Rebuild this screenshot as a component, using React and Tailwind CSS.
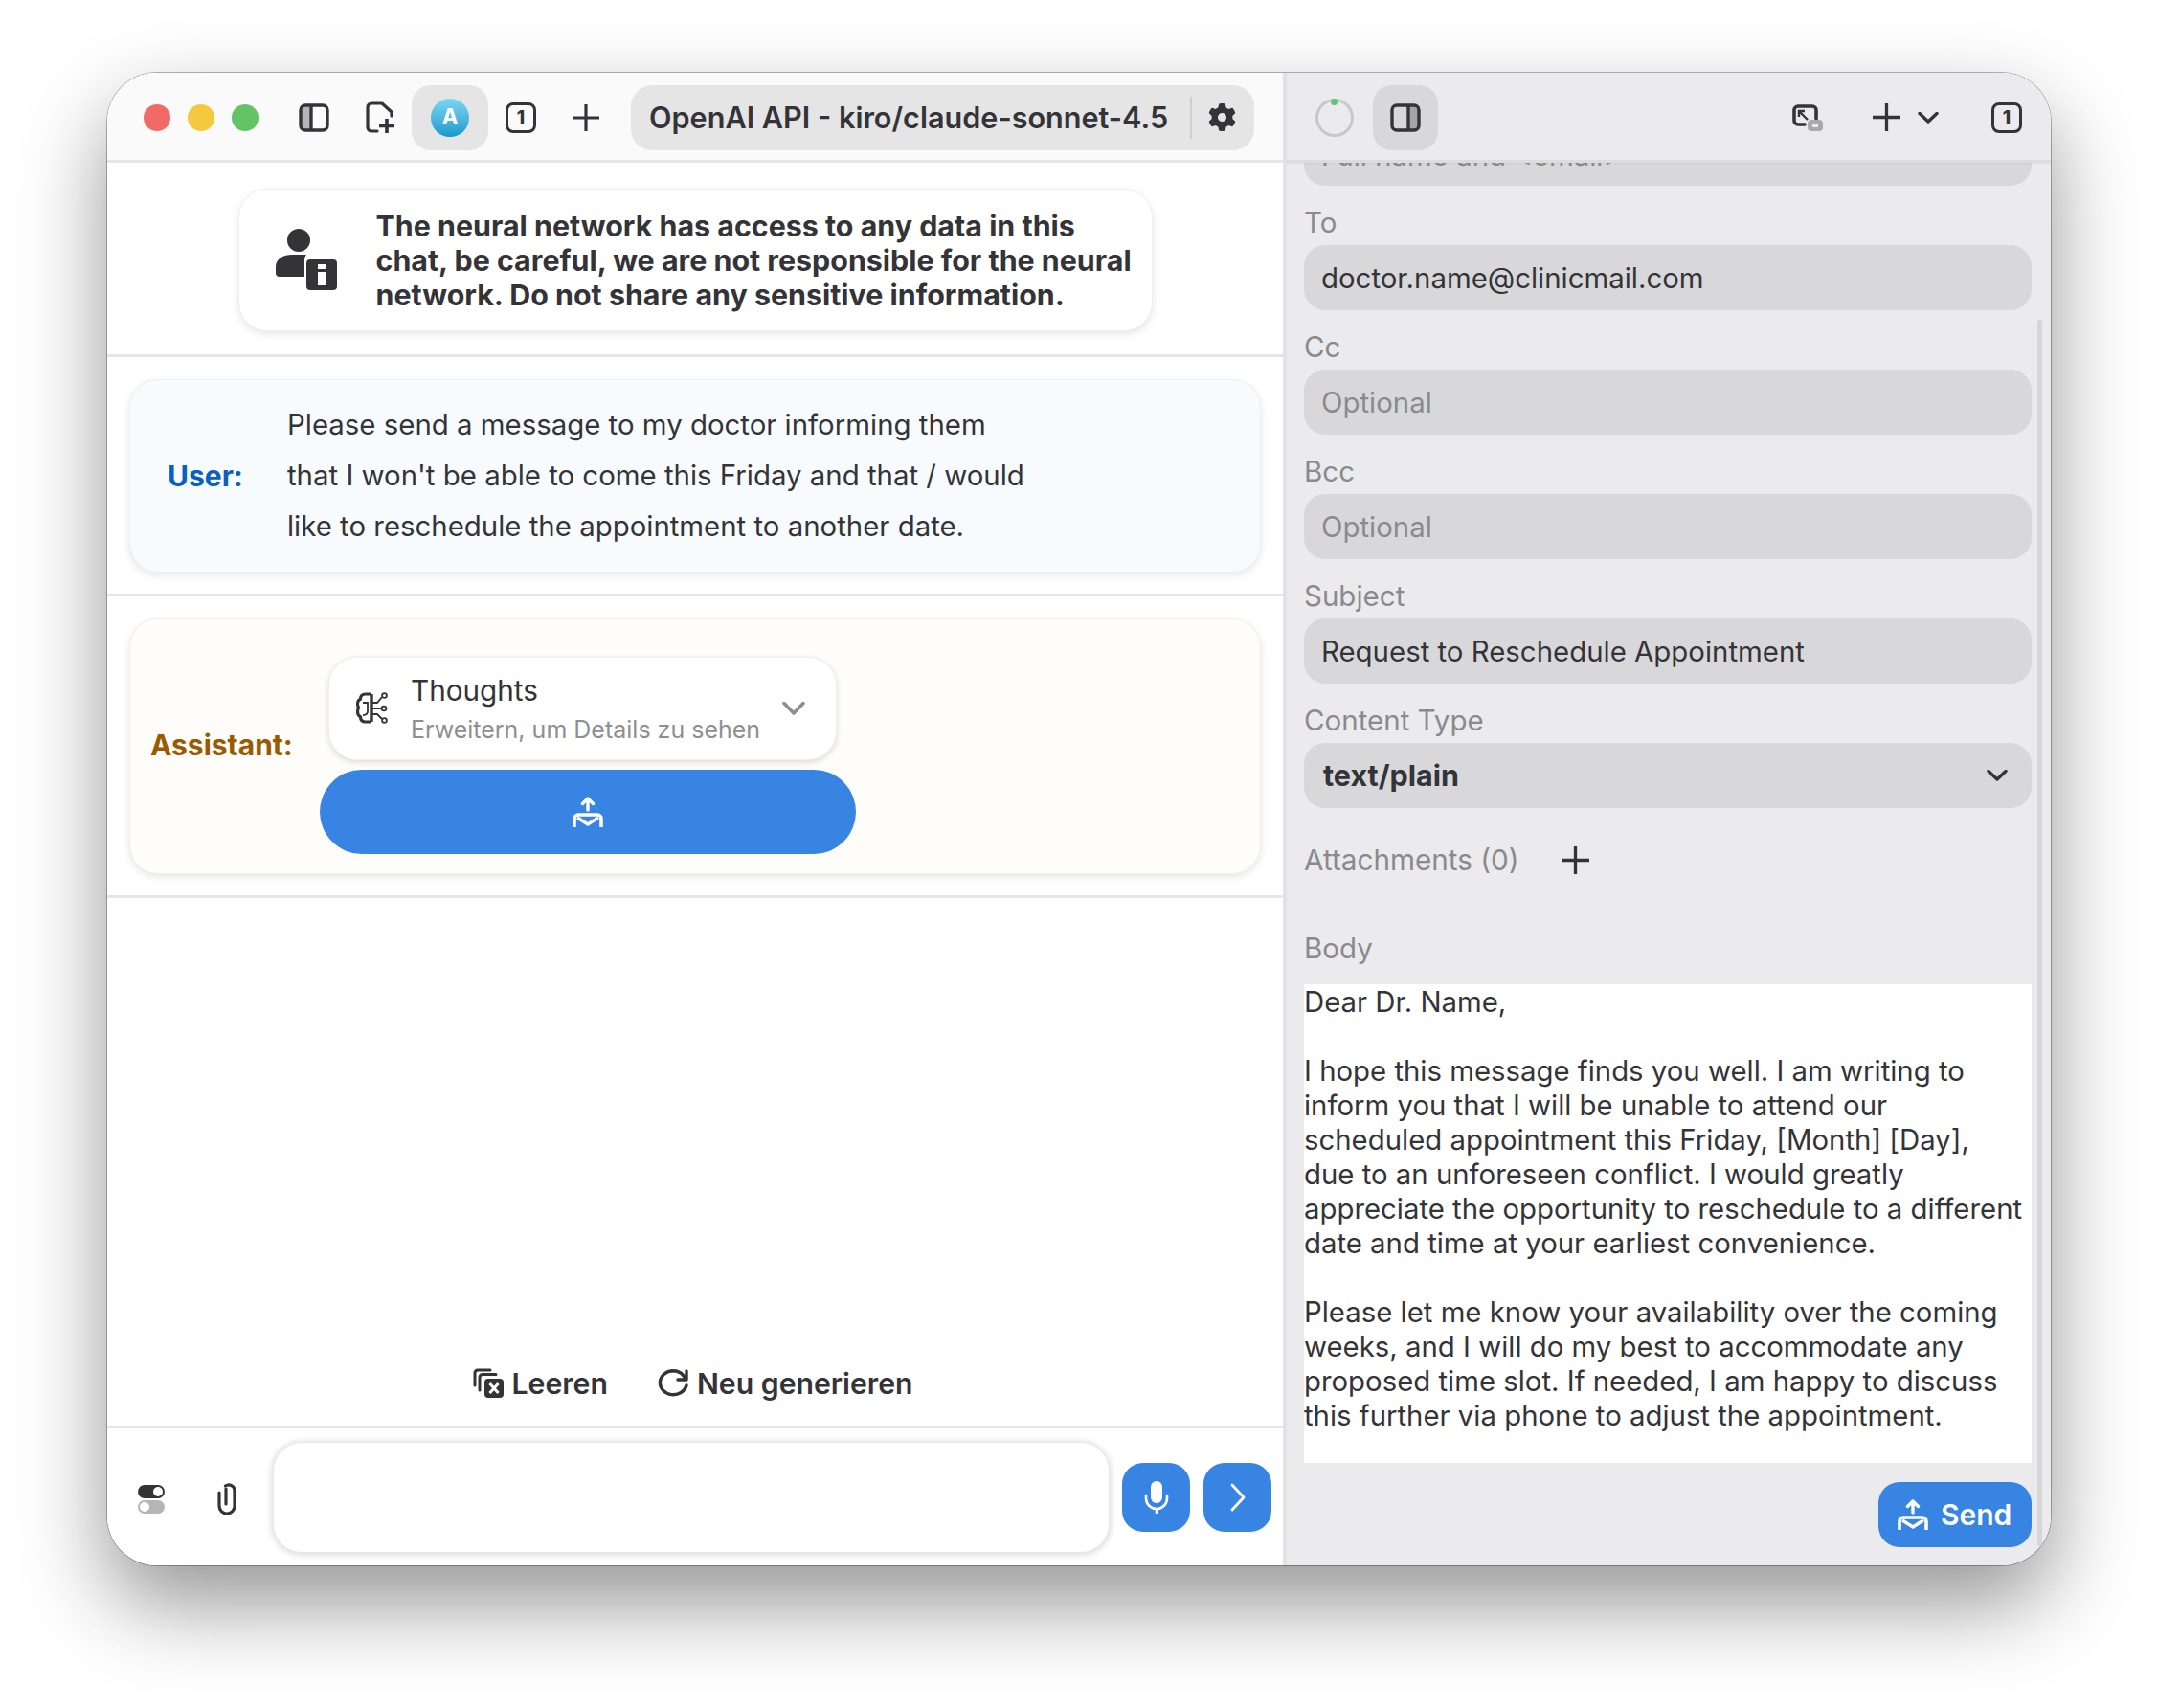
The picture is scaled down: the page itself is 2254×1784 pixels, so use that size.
import React from "react";
import { FaGear } from "react-icons/fa6";

const ink = "#333338";

function PlusIcon({ size = 28 }) {
  return (
    <svg width={size} height={size} viewBox="0 0 28 28" fill="none" stroke={ink} strokeWidth="3.2" className="shrink-0">
      <path d="M14 0v28M0 14h28" />
    </svg>
  );
}

function Chevron({ w = 22, h = 12, color = ink, sw = 3.4 }) {
  return (
    <svg width={w} height={h} viewBox={`0 0 ${w} ${h}`} fill="none" stroke={color} strokeWidth={sw} className="shrink-0">
      <path d={`M2 1.5L${w / 2} ${h - 2}L${w - 2} 1.5`} strokeLinecap="round" strokeLinejoin="round" />
    </svg>
  );
}

function SidebarIcon({ side = "left" }) {
  return (
    <svg width="32" height="30" viewBox="0 0 32 30" fill="none" className="shrink-0">
      {side === "left" ? <path d="M5 3h7v24H5a3 3 0 0 1-3-3V6a3 3 0 0 1 3-3z" fill="#b5b5b8" /> : <path d="M20 3h7a3 3 0 0 1 3 3v18a3 3 0 0 1-3 3h-7z" fill="#a5a5a9" />}
      <rect x="2" y="2" width="28" height="26" rx="5" stroke={ink} strokeWidth="3.4" />
      <path d={side === "left" ? "M13 3v24" : "M19 3v24"} stroke={ink} strokeWidth="3.4" />
    </svg>
  );
}

function FilePlusIcon() {
  return (
    <svg width="32" height="34" viewBox="0 0 32 34" fill="none" className="shrink-0">
      <path d="M12 31H6a4 4 0 0 1-4-4V6a4 4 0 0 1 4-4h11l10 9v4" stroke={ink} strokeWidth="3.2" strokeLinecap="round" strokeLinejoin="round" />
      <path d="M22 18v15M14 25.5h16" stroke={ink} strokeWidth="3.6" />
    </svg>
  );
}

function NumberBox() {
  return (
    <div className="w-8 h-8 shrink-0 rounded-lg border-[3.5px] border-[#333338] flex items-center justify-center text-[19px] leading-none font-extrabold text-[#333338]">1</div>
  );
}

function PersonInfoIcon() {
  return (
    <svg width="64" height="64" viewBox="0 0 64 64" className="shrink-0">
      <circle cx="24" cy="12" r="12" fill={ink} />
      <path d="M0 46v-6c0-9 8-13 17-13h15a8 8 0 0 0-2 5v18H4a4 4 0 0 1-4-4z" fill={ink} />
      <rect x="32" y="32" width="32" height="32" rx="4" fill={ink} />
      <rect x="44" y="37" width="8" height="5" fill="#fff" />
      <rect x="44" y="45" width="8" height="14" fill="#fff" />
    </svg>
  );
}

function BrainIcon() {
  return (
    <svg width="34" height="33" viewBox="0 0 34 33" fill="none" className="shrink-0" stroke={ink}>
      <path d="M16 2H10C6.5 2 4.5 4 4.5 7C1 9 1 13 2.5 16C1 20 1 24 4.5 26C4.5 29 6.5 31 10 31H16" strokeWidth="3.2" />
      <path d="M16 2V31" strokeWidth="3.4" />
      <path d="M7 11H12V20M7 24C9 24 12 24 12 20" strokeWidth="1.8" />
      <path d="M17 11H22L27 5M17 17H26M17 23H22L27 28" strokeWidth="1.9" />
      <circle cx="29.5" cy="3.5" r="2.4" strokeWidth="1.8" />
      <circle cx="29" cy="17" r="2.4" strokeWidth="1.8" />
      <circle cx="29.5" cy="29.5" r="2.4" strokeWidth="1.8" />
    </svg>
  );
}

function SendMailIcon() {
  return (
    <svg width="32" height="32" viewBox="0 0 32 32" fill="none" stroke="#fff" className="shrink-0">
      <path d="M16 14V2M10.5 7.5L16 2l5.500 5.500" strokeWidth="3.4" strokeLinecap="round" strokeLinejoin="round" />
      <path d="M2 32V23a4 4 0 0 1 4-4h20a4 4 0 0 1 4 4v9" strokeWidth="3.6" />
      <path d="M5 22l11 7 11-7" strokeWidth="3.4" />
    </svg>
  );
}

function ClearIcon() {
  return (
    <svg width="32" height="32" viewBox="0 0 32 32" fill="none" className="shrink-0">
      <path d="M2 18V5a3 3 0 0 1 3-3h13" stroke={ink} strokeWidth="3" strokeLinecap="round" />
      <path d="M7 23V9.500a3 3 0 0 1 3-3h14" stroke={ink} strokeWidth="3" strokeLinecap="round" />
      <rect x="12" y="11" width="20" height="20" rx="4" fill={ink} />
      <path d="M17.500 16l9 10M26.500 16l-9 10" stroke="#fff" strokeWidth="3" />
    </svg>
  );
}

function RefreshIcon() {
  return (
    <svg width="32" height="30" viewBox="0 0 32 30" fill="none" stroke={ink} strokeWidth="3.4" className="shrink-0">
      <path d="M30 17a14 12.500 0 1 1-14-15.300c4.500 0 8.500 2 11 5.300l2 3" strokeLinecap="round" />
      <path d="M30 2v9H21" strokeLinecap="round" strokeLinejoin="round" />
    </svg>
  );
}

function ToggleIcon() {
  return (
    <svg width="28" height="32" viewBox="0 0 28 32" className="shrink-0">
      <rect x="0" y="1" width="28" height="14" rx="7" fill={ink} />
      <circle cx="21" cy="8" r="5" fill="#fff" />
      <rect x="0" y="17" width="28" height="14" rx="7" fill="#b5b5b8" />
      <circle cx="7" cy="24" r="5" fill="#fff" />
    </svg>
  );
}

function ClipIcon() {
  return (
    <svg width="20" height="34" viewBox="0 0 20 34" fill="none" stroke={ink} strokeWidth="3.2" strokeLinecap="round" className="shrink-0">
      <path d="M9 7v16" />
      <path d="M2 11v14a8 8 0 0 0 16 0V9a6 6 0 0 0-9.500-5" />
    </svg>
  );
}

function MicIcon() {
  return (
    <svg width="26" height="34" viewBox="0 0 26 34" fill="none" className="shrink-0">
      <rect x="7" y="0" width="12" height="23" rx="6" fill="#fff" />
      <path d="M2 15v3a11 11 0 0 0 22 0v-3M13 29v5" stroke="#fff" strokeWidth="2.6" strokeLinecap="round" />
    </svg>
  );
}

function NextIcon() {
  return (
    <svg width="17" height="30" viewBox="0 0 17 30" fill="none" stroke="#fff" strokeWidth="2.8" strokeLinecap="round" strokeLinejoin="round" className="shrink-0">
      <path d="M3 2l12 13L3 28" />
    </svg>
  );
}

function DetachIcon() {
  return (
    <svg width="32" height="28" viewBox="0 0 32 28" fill="none" className="shrink-0">
      <path d="M13 21H6a4 4 0 0 1-4-4V6a4 4 0 0 1 4-4h15a4 4 0 0 1 4 4v9" stroke={ink} strokeWidth="3.6" strokeLinecap="round" />
      <path d="M16 16L7 7M7 13V7h6" stroke={ink} strokeWidth="2.4" />
      <rect x="16" y="16" width="16" height="12" rx="4" fill="#a9a9ad" />
      <rect x="21" y="20" width="6" height="4" rx="1" fill="#ebebed" />
    </svg>
  );
}

function Label({ children }) {
  return <div className="h-[62px] pt-[20px] text-[29.5px] leading-[36px] text-[#8a8a8e]">{children}</div>;
}

function Field({ children, placeholder }) {
  return (
    <div className={`h-[68px] rounded-[22px] bg-[#d8d8da] px-[18px] pt-[2px] flex items-center text-[29.4px] leading-[36px] ${placeholder ? "text-[#8a8a8e]" : "text-[#333338]"}`}>
      {children}
    </div>
  );
}

const bodyLines = [
  "Dear Dr. Name,",
  "",
  "I hope this message finds you well. I am writing to",
  "inform you that I will be unable to attend our",
  "scheduled appointment this Friday, [Month] [Day],",
  "due to an unforeseen conflict. I would greatly",
  "appreciate the opportunity to reschedule to a different",
  "date and time at your earliest convenience.",
  "",
  "Please let me know your availability over the coming",
  "weeks, and I will do my best to accommodate any",
  "proposed time slot. If needed, I am happy to discuss",
  "this further via phone to adjust the appointment.",
];

export default function App() {
  return (
    <div className="w-[2254px] h-[1784px] bg-white pl-[112px] pt-[76px] font-[family-name:Inter,sans-serif] text-[#333338] overflow-hidden">
      <div className="w-[2030px] h-[1559px] rounded-[52px] shadow-[0_0_0_1px_rgba(0,0,0,0.28),0_40px_90px_rgba(0,0,0,0.42)]">
        <div className="w-full h-full rounded-[52px] overflow-hidden flex bg-white">
          {/* Left pane */}
          <div className="w-[1232px] shrink-0 flex flex-col border-r-4 border-[#e2e2e4] bg-white">
            <div className="h-[94px] shrink-0 flex items-center pt-[2px] bg-[#fafafa] border-b-[3px] border-[#e6e6e6]">
              <div className="ml-[38px] flex gap-[18px]">
                <div className="w-7 h-7 rounded-full bg-[#f26a66]" />
                <div className="w-7 h-7 rounded-full bg-[#f5c93f]" />
                <div className="w-7 h-7 rounded-full bg-[#63c466]" />
              </div>
              <div className="ml-[42px]"><SidebarIcon /></div>
              <div className="ml-[38px]"><FilePlusIcon /></div>
              <div className="ml-[16px] w-[80px] h-[68px] rounded-[20px] bg-[#e5e5e5] flex items-center justify-center">
                <div className="w-10 h-10 rounded-full bg-gradient-to-b from-[#7ad6f2] to-[#0f9bcd] flex items-center justify-center text-white font-bold text-[23px] leading-none">A</div>
              </div>
              <div className="ml-[18px]"><NumberBox /></div>
              <div className="ml-[38px]"><PlusIcon /></div>
              <div className="ml-[33px] w-[651px] h-[68px] rounded-[22px] bg-[#e5e5e5] flex items-center pl-[19px]">
                <div className="w-[565px] text-[30.6px] leading-[36px] font-semibold whitespace-nowrap">OpenAI API - kiro/claude-sonnet-4.5</div>
                <div className="w-[2px] h-[44px] bg-[#cfcfcf]" />
                <FaGear size={29} color={ink} className="ml-[17px]" />
              </div>
            </div>

            <div className="h-[203px] shrink-0 flex items-center justify-center border-b-[3px] border-[#e6e6e6] pt-[3px]">
              <div className="w-[955px] h-[149px] rounded-[30px] bg-white border border-[#efefef] shadow-[0_3px_8px_rgba(0,0,0,0.1)] flex items-center pl-[38px]">
                <div className="-mt-[2px]"><PersonInfoIcon /></div>
                <div className="ml-[41px] text-[30.4px] leading-[36px] font-bold whitespace-nowrap">
                  <div>The neural network has access to any data in this</div>
                  <div>chat, be careful, we are not responsible for the neural</div>
                  <div>network. Do not share any sensitive information.</div>
                </div>
              </div>
            </div>

            <div className="h-[250px] shrink-0 flex items-center px-[23px] border-b-[3px] border-[#e6e6e6]">
              <div className="w-[1182px] h-[202px] rounded-[30px] bg-[#f8fbfe] border border-[#eef0f2] shadow-[0_3px_8px_rgba(0,0,0,0.1)] flex items-center pl-[39px]">
                <div className="w-[125px] text-[#0a5fc0] text-[30px] leading-[36px] font-bold">User:</div>
                <div className="text-[29.4px] leading-[53px] whitespace-nowrap">
                  <div>Please send a message to my doctor informing them</div>
                  <div>that I won't be able to come this Friday and that / would</div>
                  <div>like to reschedule the appointment to another date.</div>
                </div>
              </div>
            </div>

            <div className="h-[315px] shrink-0 flex items-center px-[23px] border-b-[3px] border-[#e6e6e6]">
              <div className="w-[1182px] h-[267px] rounded-[30px] bg-[#fefdfa] border border-[#f0efec] shadow-[0_3px_8px_rgba(0,0,0,0.1)] flex items-center pl-[21px]">
                <div className="w-[177px] shrink-0 text-[#995a00] text-[30px] leading-[36px] font-bold -mt-[2px]">Assistant:</div>
                <div className="w-[560px] flex flex-col mt-[19px]">
                  <div className="ml-[9px] w-[531px] h-[108px] rounded-[30px] bg-white border border-[#f0f0f0] shadow-[0_2px_6px_rgba(0,0,0,0.14)] flex items-center pl-[28px]">
                    <BrainIcon />
                    <div className="ml-[23px] flex-1">
                      <div className="text-[29.7px] leading-[40px]">Thoughts</div>
                      <div className="text-[25px] leading-[34px] text-[#8e8e93] mt-[4px]">Erweitern, um Details zu sehen</div>
                    </div>
                    <div className="mr-[32px]"><Chevron w={24} h={14} color="#8e8e93" sw={3.6} /></div>
                  </div>
                  <div className="mt-[10px] w-[560px] h-[88px] rounded-full bg-[#3784e3] flex items-center justify-center">
                    <SendMailIcon />
                  </div>
                </div>
              </div>
            </div>

            <div className="flex-1 flex items-end justify-center border-b-[3px] border-[#e6e6e6] pb-[26px]">
              <div className="flex items-center text-[30.2px] leading-[36px] font-semibold whitespace-nowrap -ml-[4px]">
                <ClearIcon />
                <span className="ml-[8px]">Leeren</span>
                <div className="ml-[52px]"><RefreshIcon /></div>
                <span className="ml-[9px]">Neu generieren</span>
              </div>
            </div>

            <div className="h-[143px] shrink-0 flex items-start">
              <div className="mt-[58px] ml-[32px]"><ToggleIcon /></div>
              <div className="mt-[56px] ml-[55px]"><ClipIcon /></div>
              <div className="mt-[14px] ml-[38px] w-[874px] h-[116px] rounded-[30px] bg-white border border-[#e8e8e8] shadow-[0_1px_6px_2px_rgba(0,0,0,0.12)]" />
              <div className="mt-[36px] ml-[13px] w-[71px] h-[72px] rounded-[22px] bg-[#3784e3] flex items-center justify-center"><MicIcon /></div>
              <div className="mt-[36px] ml-[14px] w-[71px] h-[72px] rounded-[22px] bg-[#3784e3] flex items-center justify-center"><NextIcon /></div>
            </div>
          </div>

          {/* Right pane */}
          <div className="flex-1 min-w-0 flex flex-col bg-[#ebebed] relative">
            <div className="h-[94px] shrink-0 flex items-center pt-[2px] bg-[#ebebed] border-b-[3px] border-[#dcdcde] relative z-10 shadow-[0_1px_2px_rgba(0,0,0,0.04)]">
              <div className="ml-[30px] w-10 h-10 rounded-full border-[3.5px] border-[#c8c8ca] relative">
                <div className="absolute -top-[3px] left-[13px] w-[7px] h-[7px] rounded-full bg-[#58c77a]" />
              </div>
              <div className="ml-[20px] w-[68px] h-[68px] rounded-[20px] bg-[#d8d8da] flex items-center justify-center"><SidebarIcon side="right" /></div>
              <div className="ml-[370px]"><DetachIcon /></div>
              <div className="ml-[52px]"><PlusIcon size={29} /></div>
              <div className="ml-[18px]"><Chevron /></div>
              <div className="ml-[55px]"><NumberBox /></div>
            </div>

            <div className="flex-1 overflow-hidden pl-[18px] pr-[20px]">
              <div className="-mt-[44px]">
                <div className="h-[68px] rounded-[22px] bg-[#d8d8da] px-[18px] pt-[6px] flex items-center text-[29.4px] leading-[36px] text-[#8a8a8e]">Full name and &lt;email&gt;</div>
                <Label>To</Label>
                <Field>doctor.name@clinicmail.com</Field>
                <Label>Cc</Label>
                <Field placeholder>Optional</Field>
                <Label>Bcc</Label>
                <Field placeholder>Optional</Field>
                <Label>Subject</Label>
                <Field>Request to Reschedule Appointment</Field>
                <Label>Content Type</Label>
                <div className="h-[68px] rounded-[22px] bg-[#d8d8da] pl-[20px] pr-[25px] flex items-center justify-between">
                  <span className="text-[30.5px] leading-[36px] font-bold">text/plain</span>
                  <Chevron />
                </div>
                <div className="mt-[36px] h-[36px] flex items-center text-[29.7px] leading-[36px] text-[#8a8a8e]">
                  <span>Attachments (0)</span>
                  <div className="ml-[44px]"><PlusIcon size={29} /></div>
                </div>
                <div className="mt-[56px] mb-[20px] text-[29.5px] leading-[36px] text-[#8a8a8e]">Body</div>
                <div className="h-[500px] bg-white pt-[1px] text-[29.35px] leading-[36px] whitespace-nowrap overflow-hidden">
                  {bodyLines.map((l, i) => (
                    <div key={i} className="h-[36px]">{l}</div>
                  ))}
                </div>
                <div className="mt-[20px] flex justify-end">
                  <div className="w-[160px] h-[68px] rounded-[22px] bg-[#3784e3] flex items-center pl-[20px] text-white text-[30px] font-semibold">
                    <SendMailIcon />
                    <span className="ml-[13px]">Send</span>
                  </div>
                </div>
              </div>
            </div>

            <div className="absolute right-[9px] top-[258px] bottom-[20px] w-[5px] rounded-full bg-[#d6d6d8]" />
          </div>
        </div>
      </div>
    </div>
  );
}
